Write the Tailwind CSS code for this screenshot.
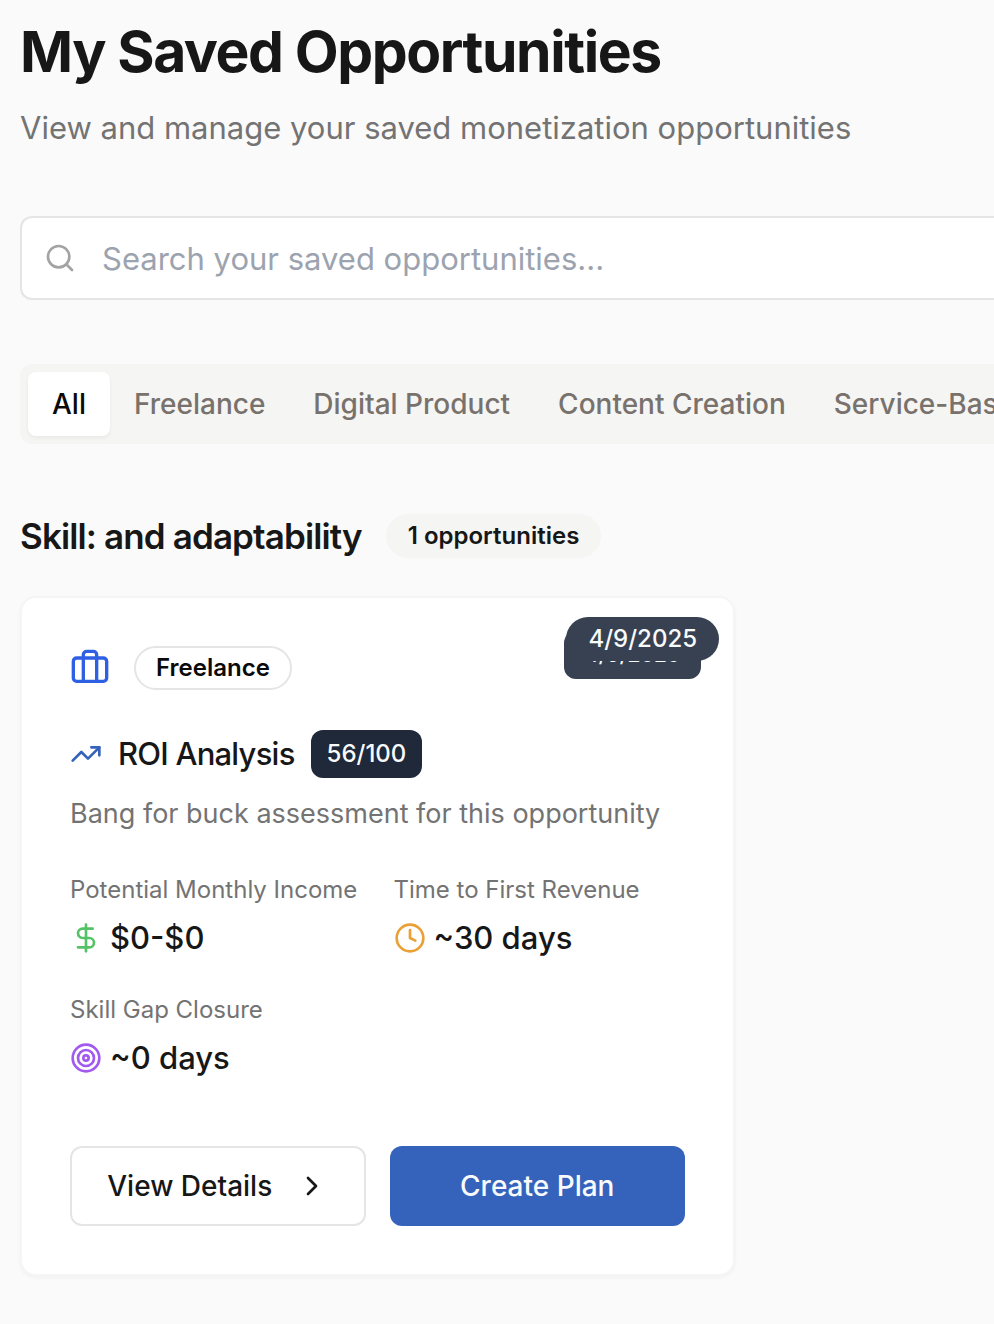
<!DOCTYPE html>
<html lang="en">
<head>
<meta charset="utf-8">
<meta name="viewport" content="width=device-width, initial-scale=1">
<title>My Saved Opportunities</title>
<script src="https://cdn.jsdelivr.net/npm/@tailwindcss/browser@4"></script>
</head>
<body class="min-h-screen overflow-x-hidden bg-[#fafafa] font-['Inter','Liberation_Sans',sans-serif] text-[#171717]">
<main class="flex flex-col gap-16 pt-4 pb-12 pl-5">
  <header class="flex flex-col gap-4">
    <h1 class="text-[57px] leading-[72px] font-bold tracking-tight">My Saved Opportunities</h1>
    <p class="text-[31px] leading-[48px] text-[#737373]">View and manage your saved monetization opportunities</p>
  </header>

  <label class="flex h-[84px] items-center gap-[26px] rounded-l-xl border-2 border-r-0 border-[#e5e5e5] bg-white pl-[22px]">
    <svg class="size-8 shrink-0 text-[#a3a3a3]" viewBox="0 0 24 24" fill="none" stroke="currentColor" stroke-width="2" stroke-linecap="round" stroke-linejoin="round" aria-hidden="true"><circle cx="11" cy="11" r="8"/><path d="m21 21-4.3-4.3"/></svg>
    <input type="search" aria-label="Search your saved opportunities" placeholder="Search your saved opportunities..." class="h-full min-w-0 flex-1 bg-transparent text-[31px] outline-none placeholder:text-[#9ca3af]">
  </label>

  <div role="tablist" class="flex h-20 items-center overflow-hidden rounded-l-xl bg-[#f5f5f4] px-2 text-[28px] font-medium whitespace-nowrap text-[#78716c]">
    <button role="tab" aria-selected="true" class="h-16 shrink-0 rounded-lg bg-white px-6 text-[#0c0a09] shadow-[0_2px_4px_rgb(0_0_0/0.05)]">All</button>
    <button role="tab" aria-selected="false" class="h-16 shrink-0 px-6">Freelance</button>
    <button role="tab" aria-selected="false" class="h-16 shrink-0 px-6">Digital Product</button>
    <button role="tab" aria-selected="false" class="h-16 shrink-0 px-6">Content Creation</button>
    <button role="tab" aria-selected="false" class="h-16 shrink-0 px-6">Service-Based</button>
  </div>

  <section class="flex flex-col gap-8">
    <div class="flex items-center gap-6">
      <h2 class="text-[35px] leading-[56px] font-semibold tracking-tight">Skill: and adaptability</h2>
      <span class="flex h-11 items-center rounded-full bg-[#f5f5f4] px-[22px] text-[24px] font-semibold">1 opportunities</span>
    </div>

    <article class="relative w-full max-w-[715px] rounded-2xl border-2 border-[#f5f5f5] bg-white p-12 shadow-[0_2px_4px_rgb(0_0_0/0.04)]">
      <span class="absolute top-[33px] right-8 flex h-12 items-center rounded-xl bg-[#374151] px-[21px] text-[21px] font-medium text-[#f8fafc]">4/9/2025</span>
      <span class="absolute top-[19px] right-[14px] flex h-11 items-center rounded-full bg-[#374151] px-[22px] text-[24px] font-medium text-[#f8fafc]">4/9/2025</span>

      <div class="flex items-center gap-6">
        <svg class="size-10 text-[#2f5fe3]" viewBox="0 0 24 24" fill="none" stroke="currentColor" stroke-width="2" stroke-linecap="round" stroke-linejoin="round" aria-hidden="true"><rect width="20" height="14" x="2" y="6" rx="2"/><path d="M16 20V4a2 2 0 0 0-2-2h-4a2 2 0 0 0-2 2v16"/></svg>
        <span class="flex h-11 items-center rounded-full border-2 border-[#e5e5e5] px-5 text-[24px] font-semibold text-[#0a0a0a]">Freelance</span>
      </div>

      <div class="mt-10 flex items-center gap-4">
        <svg class="size-8 text-[#3563bb]" viewBox="0 0 24 24" fill="none" stroke="currentColor" stroke-width="2" stroke-linecap="round" stroke-linejoin="round" aria-hidden="true"><path d="m22 7-8.500 8.500-5-5L2 17"/><path d="M16 7h6v6"/></svg>
        <h3 class="text-[31px] leading-[48px] font-medium tracking-tight">ROI Analysis</h3>
        <span class="flex h-12 items-center rounded-xl bg-[#1f293a] px-4 text-[24px] font-medium text-[#f8fafc]">56/100</span>
      </div>
      <p class="mt-4 text-[27px] leading-[40px] text-[#737373]">Bang for buck assessment for this opportunity</p>

      <dl class="mt-10 grid grid-cols-2 gap-x-8 gap-y-8">
        <div class="flex flex-col gap-2">
          <dt class="text-[24px] leading-[32px] whitespace-nowrap text-[#737373]">Potential Monthly Income</dt>
          <dd class="flex items-center gap-2 text-[31px] leading-[48px] font-medium">
            <svg class="size-8 text-[#55c267]" viewBox="0 0 24 24" fill="none" stroke="currentColor" stroke-width="2" stroke-linecap="round" stroke-linejoin="round" aria-hidden="true"><path d="M12 2v20"/><path d="M17 5H9.500a3.500 3.500 0 0 0 0 7h5a3.500 3.500 0 0 1 0 7H6"/></svg>
            $0-$0
          </dd>
        </div>
        <div class="flex flex-col gap-2">
          <dt class="text-[24px] leading-[32px] whitespace-nowrap text-[#737373]">Time to First Revenue</dt>
          <dd class="flex items-center gap-2 text-[31px] leading-[48px] font-medium">
            <svg class="size-8 text-[#eaa037]" viewBox="0 0 24 24" fill="none" stroke="currentColor" stroke-width="2" stroke-linecap="round" stroke-linejoin="round" aria-hidden="true"><circle cx="12" cy="12" r="10"/><path d="M12 6v6l4 2"/></svg>
            ~30 days
          </dd>
        </div>
        <div class="flex flex-col gap-2">
          <dt class="text-[24px] leading-[32px] whitespace-nowrap text-[#737373]">Skill Gap Closure</dt>
          <dd class="flex items-center gap-2 text-[31px] leading-[48px] font-medium">
            <svg class="size-8 text-[#a259f0]" viewBox="0 0 24 24" fill="none" stroke="currentColor" stroke-width="2" stroke-linecap="round" stroke-linejoin="round" aria-hidden="true"><circle cx="12" cy="12" r="10"/><circle cx="12" cy="12" r="6"/><circle cx="12" cy="12" r="2"/></svg>
            ~0 days
          </dd>
        </div>
      </dl>

      <div class="mt-16 grid grid-cols-2 gap-6 text-[28px] font-medium">
        <button class="flex h-20 items-center justify-center gap-6 rounded-xl border-2 border-[#e5e5e5] bg-white">
          View Details
          <svg class="size-8" viewBox="0 0 24 24" fill="none" stroke="currentColor" stroke-width="2" stroke-linecap="round" stroke-linejoin="round" aria-hidden="true"><path d="m9 18 6-6-6-6"/></svg>
        </button>
        <button class="h-20 rounded-xl bg-[#3563bb] text-[#f8fafc]">Create Plan</button>
      </div>
    </article>
  </section>
</main>
</body>
</html>
